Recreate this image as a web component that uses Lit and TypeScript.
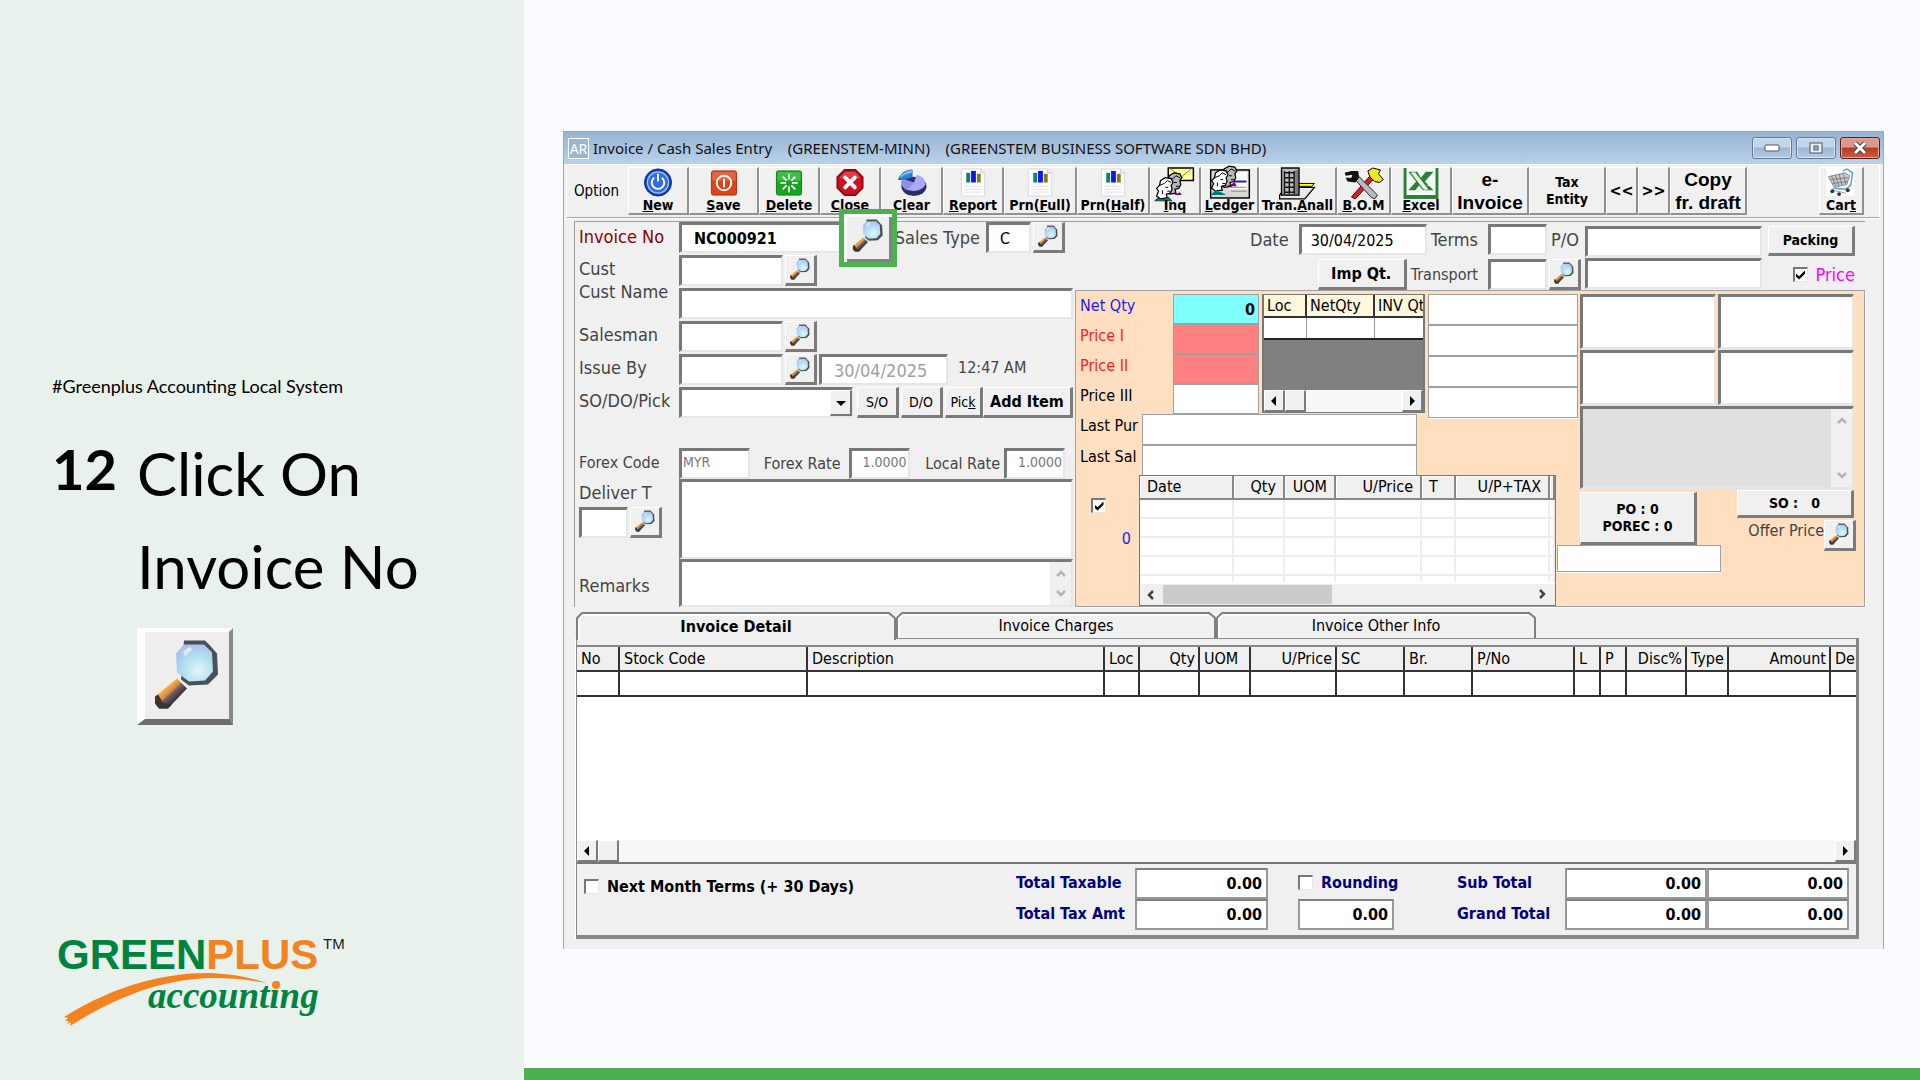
import { LitElement, html, css, svg, nothing } from "lit";
import { customElement, property } from "lit/decorators.js";

@customElement("magnifier-icon")
class MagnifierIcon extends LitElement {
  static styles = css`
    :host { display: block; width: 100%; height: 100%; }
    svg { display: block; width: 100%; height: 100%; }
  `;
  render() {
    return html`<svg viewBox="8 2 72 76" aria-hidden="true">
      <defs>
        <radialGradient id="lens" cx="0.6" cy="0.7" r="0.75">
          <stop offset="0" stop-color="#e4f6f8" />
          <stop offset="0.5" stop-color="#b4e2f2" />
          <stop offset="1" stop-color="#a9bdec" />
        </radialGradient>
        <linearGradient id="grip" x1="0.3" y1="0.3" x2="0.65" y2="0.65">
          <stop offset="0" stop-color="#ffb851" />
          <stop offset="0.45" stop-color="#d98a3c" />
          <stop offset="0.6" stop-color="#7c5f62" />
          <stop offset="1" stop-color="#3a3a42" />
        </linearGradient>
      </defs>
      <path d="M34 44 L44 54 L25 74 L16 74 L12 69 L12 62 Z" fill="url(#grip)" />
      <path d="M12 62 L12 69 L16 74 L25 74 L29 70 L20 68 L15 60 Z" fill="#3b3530" />
      <path d="M41 6 L62 6 L67 11 L74 19 L75 40 L65 50 L46 51 L38 45 Z" fill="#4a5058" />
      <path d="M41 10 L61 10 L69 18 L70 37 L62 46 L46 47 L34 38 L33 19 Z" fill="url(#lens)" />
      <path d="M40 17 L47 12 L49 15 L42 22 Z" fill="#e9f2ff" opacity="0.8" />
    </svg>`;
  }
}

@customElement("tool-icon")
class ToolIcon extends LitElement {
  @property() name = "";
  static styles = css`
    :host { display: block; height: 29px; }
    svg { display: block; height: 29px; margin: 0 auto; overflow: visible; }
  `;
  private person(x: number, fill: string) {
    return svg`<g transform="translate(${x} 0)">
      <path d="M1 20 L3 15 L1 12 L4 9 L5 4 L10 1 L16 2 L18 6 L16 9 L17 13 L15 17 L11 18 L12 22 L5 23 Z" fill=${fill} stroke="#000" stroke-width="1.3" />
      <path d="M4 9 L9 7 L12 4 L16 6" fill="none" stroke="#000" />
      <path d="M10 11 H13 M12 15 H15 M7 14 V18" stroke="#000" />
    </g>`;
  }
  private art() {
    switch (this.name) {
      case "new":
        return svg`<circle cx="15" cy="15" r="14" fill="#0d3fb5" stroke="#0a2d86" />
          <circle cx="15" cy="15" r="11" fill="#2f6bea" stroke="#a8c6ff" stroke-width="1.2" />
          <path d="M11 10 A6.500 6.500 0 1 0 19 10" fill="none" stroke="#fff" stroke-width="2" />
          <path d="M15 6 V14" stroke="#fff" stroke-width="2" />`;
      case "save":
        return svg`<rect x="2" y="3" width="26" height="25" rx="2" fill="#d9451c" stroke="#a8300f" />
          <rect x="3" y="4" width="24" height="9" fill="#ef7b58" opacity="0.6" />
          <circle cx="15" cy="15.500" r="7.500" fill="none" stroke="#fff" stroke-width="2" />
          <path d="M15 11 V20" stroke="#fff" stroke-width="2" />`;
      case "delete":
        return svg`<rect x="2" y="3" width="26" height="25" rx="2" fill="#18a522" stroke="#0b7b14" />
          <rect x="3" y="4" width="24" height="9" fill="#55cf58" opacity="0.6" />
          <path d="M15 6 V12 M15 19 V25 M6 15.500 H12 M18 15.500 H24 M8.500 9 L12.500 13 M17.500 18 L21.500 22 M21.500 9 L17.500 13 M12.500 18 L8.500 22" stroke="#fff" stroke-width="1.8" />`;
      case "close":
        return svg`<path d="M9.500 2 H20.500 L28 9.500 V20.500 L20.500 28 H9.500 L2 20.500 V9.500 Z" fill="#cf1020" stroke="#8c0a14" stroke-linejoin="round" stroke-width="2" />
          <path d="M4 10 L10 4 H20 L26 10 Q15 15 4 10Z" fill="#ee5a62" opacity="0.6" />
          <path d="M10 10 L20 20 M20 10 L10 20" stroke="#fff" stroke-width="4" stroke-linecap="round" />`;
      case "clear":
        return svg`<ellipse cx="17" cy="19" rx="13" ry="10" fill="#2d2d66" />
          <path d="M4 16 A13 10 0 0 0 29 17 A12 10 0 0 0 20 7 L17 15 Z" fill="#a9a9f5" />
          <path d="M4 13 A13 10 0 0 0 8 22 L10 23 L17 15 L6 11 Z" fill="#8f8fe6" />
          <path d="M1 12 Q4 3 15 2 L15 10 L9 11 Z" fill="#2f86d6" stroke="#155a9c" />
          <path d="M3 8 Q8 3 15 2 L15 5 Q8 6 3 10Z" fill="#7cc0f4" />`;
      case "report":
        return svg`<path d="M3 1 H23 L27 5 V29 H3 Z" fill="#fdfdfd" stroke="#dadada" />
          <path d="M23 1 V5 H27" fill="none" stroke="#c8c8c8" />
          <rect x="8" y="5" width="4" height="10" fill="#0b8080" />
          <rect x="13" y="3" width="5" height="12" fill="#1414ee" />
          <rect x="19" y="6" width="4" height="9" fill="#808010" />
          <path d="M6 19 H24 M6 22 H24 M6 25 H24" stroke="#e3e3e3" />`;
      case "inq":
        return svg`<path d="M14 0 H40 V13 H14 Z" fill="#ffff9c" stroke="#000" stroke-width="1.5" />
          <path d="M15 0 L28 9 L39 0" fill="none" stroke="#8a8a20" />
          <g transform="translate(8 4)">${this.person(2, "#b8b8b8")}</g>
          <path d="M20 28 L26 25 L28 28 Z" fill="#800080" />
          <g transform="translate(0 9)">${this.person(1, "#ffffff")}</g>
          <path d="M0 34 L3 31 L9 32 L14 30 L18 34 Z" fill="#007878" stroke="#000" stroke-width="0.600" />`;
      case "ledger":
        return svg`<rect x="1" y="2" width="40" height="29" fill="#d8d8d8" stroke="#000" stroke-width="1.500" />
          <rect x="20" y="4" width="19" height="18" fill="#fff" />
          <path d="M24 14 H38" stroke="#1a1a9c" stroke-width="2" />
          <path d="M22 20 H38 M22 24 H38" stroke="#888" />
          <g transform="translate(8 -3)">${this.person(2, "#b8b8b8")}</g>
          <path d="M17 19 L26 15 L28 19 Z" fill="#800080" />
          <g transform="translate(0 1)">${this.person(1, "#ffffff")}</g>
          <path d="M1 28 L5 24 L12 25 L17 28 Z" fill="#007878" />`;
      case "analysis":
        return svg`<path d="M2 28 L8 20 H38 L28 32 H2 Z" fill="#e9e9e9" stroke="#000" stroke-width="1.300" />
          <path d="M21 16 H38 L35 19 H21 Z" fill="#ffff20" stroke="#000" />
          <rect x="4" y="0" width="18" height="28" fill="#bdbdbd" stroke="#000" stroke-width="1.500" />
          <path d="M7 5 H17 M7 10 H17 M7 15 H17 M7 20 H17 M7 25 H17 M7 3 V27 M12 3 V27 M17 3 V27" stroke="#111" stroke-width="1.500" />
          <rect x="18" y="2" width="3" height="25" fill="#7b7b7b" />`;
      case "bom":
        return svg`<path d="M8 30 L12 32 L34 8 L30 5 Z" fill="#e01b24" stroke="#500" />
          <path d="M25 3 L30 0 L38 2 L36 6 L41 12 L37 15 L32 14 L27 9 Z" fill="#eee62a" stroke="#000" />
          <path d="M10 10 L14 7 L35 28 L32 32 L28 30 Z" fill="#b9b9c2" stroke="#222" />
          <path d="M1 5 L8 3 L15 3 L16 10 L12 15 L4 14 L2 10 L8 10 L9 7 L2 8 Z" fill="#111" />`;
      case "excel":
        return svg`<rect x="0" y="0" width="36" height="32" fill="#2d7d3a" />
          <rect x="3" y="0" width="30" height="28" fill="#f4faf4" />
          <path d="M5 4 H14 L18 10 L23 4 H31 L22 14 L31 23 H20 L16 18 L12 23 H5 L13 14 Z" fill="#2d7d3a" />
          <path d="M8 5 H12 L25 22 H21 Z M24 15 H31 M24 18 H31" fill="#e6f3e6" stroke="#e6f3e6" stroke-width="0.800" />`;
      case "cart":
        return svg`<rect x="0" y="0" width="29" height="29" fill="#fff" />
          <path d="M17 3 L21 1 L27 5 L25 18 L20 22 L8 21" fill="none" stroke="#4f9be0" stroke-width="1.500" />
          <path d="M2 9 L19 5 L24 8 L21 17 L8 20 Z" fill="#c9c9c9" stroke="#8b8b8b" />
          <path d="M5 8 L10 19 M9 7 L13 19 M13 6 L16 18 M17 5 L20 17 M4 12 L23 10 M6 16 L22 14" stroke="#777" stroke-width="0.900" />
          <path d="M8 20 L6 25 M20 20 L22 25 M6 23 L20 26" stroke="#999" />
          <circle cx="6" cy="24" r="2" fill="#333" /><circle cx="13" cy="27" r="2" fill="#333" /><circle cx="22" cy="23" r="2" fill="#333" />`;
      default:
        return nothing;
    }
  }
  render() {
    const wide = ["inq", "ledger", "analysis", "bom"].includes(this.name);
    const w = wide ? 42 : this.name === "excel" ? 36 : 30;
    return html`<svg width=${w} viewBox="0 0 ${w} 30" aria-hidden="true">${this.art()}</svg>`;
  }
}

type Tool = { icon: string; pre: string; key: string; post: string; cls: string };

const TOOLS: Tool[] = [
  { icon: "new", pre: "", key: "N", post: "ew", cls: "w60" },
  { icon: "save", pre: "", key: "S", post: "ave", cls: "w70" },
  { icon: "delete", pre: "", key: "D", post: "elete", cls: "w60" },
  { icon: "close", pre: "", key: "C", post: "lose", cls: "w60" },
  { icon: "clear", pre: "C", key: "l", post: "ear", cls: "w62" },
  { icon: "report", pre: "", key: "R", post: "eport", cls: "w60" },
  { icon: "report", pre: "Prn(", key: "F", post: "ull)", cls: "w73" },
  { icon: "report", pre: "Prn(", key: "H", post: "alf)", cls: "w73" },
  { icon: "inq", pre: "", key: "I", post: "nq", cls: "w51" },
  { icon: "ledger", pre: "", key: "L", post: "edger", cls: "w57" },
  { icon: "analysis", pre: "Tran.", key: "A", post: "nall", cls: "w79" },
  { icon: "bom", pre: "", key: "B", post: ".O.M", cls: "w53" },
  { icon: "excel", pre: "", key: "E", post: "xcel", cls: "w60" },
];

const LINE_COLUMNS: [string, string, string][] = [
  ["No", "c42", ""], ["Stock Code", "c188", ""], ["Description", "", ""], ["Loc", "c35", ""],
  ["Qty", "c60", "num"], ["UOM", "c51", ""], ["U/Price", "c86", "num"], ["SC", "c68", ""],
  ["Br.", "c68", ""], ["P/No", "c102", ""], ["L", "c26", ""], ["P", "c26", ""],
  ["Disc%", "c60", "num"], ["Type", "c42", ""], ["Amount", "c102", "num"], ["De", "c26", ""],
];

const HISTORY_COLUMNS: [string, string, string][] = [
  ["Date", "", ""], ["Qty", "c51", "num"], ["UOM", "c51", "num"], ["U/Price", "c86", "num"],
  ["T", "c34", ""], ["U/P+TAX", "c94", "num"], ["", "c6", ""],
];

@customElement("app-root")
class AppRoot extends LitElement {
  static styles = css`
    :host {
      display: block;
      color: #000;
      font-family: "DejaVu Sans Condensed", "DejaVu Sans", sans-serif;
      font-size: 16px;
    }
    * { box-sizing: border-box; }
    button, input, select, textarea { font: inherit; color: inherit; margin: 0; border-radius: 0; min-width: 0; }
    button { cursor: pointer; white-space: nowrap; }
    .page { display: grid; grid-template-columns: 524px minmax(0, 1fr); min-height: 100vh; }

    .side { display: flex; flex-direction: column; padding: 373px 52px 44px; background: #e8f1ec; font-family: Lato, sans-serif; }
    .tag { margin: 0; font-size: 18px; line-height: 26px; }
    .step { display: flex; gap: 20px; margin: 28px 0 0; font-weight: 400; font-size: 60px; line-height: 93px; }
    .step-no { font-weight: 700; font-size: 56px; line-height: 84px; }
    .sample { width: 96px; height: 97px; margin: 15px 0 0 85px; padding: 2px 6px 4px 6px; background: #eeeeee; border: solid; border-width: 4px 4px 6px 8px; border-color: #fff #8a8a8a #6d6d6d #fff; }
    .logo { margin-top: auto; }
    .logo svg { display: block; width: 300px; height: 104px; }

    .main { display: flex; align-items: center; padding: 0 36px 12px 39px; background: #fafbff; border-bottom: 12px solid #4caf50; }
    .window { flex: 1; min-width: 0; margin-top: 24px; background: #f0f0f0; border: solid #99a9ba; border-width: 1px 1px 0; }
    .title { display: flex; align-items: center; gap: 4px; height: 32px; padding: 0 3px 0 4px; background: linear-gradient(#98b4d3, #b9d1ea); font-family: "Noto Sans", sans-serif; white-space: pre; }
    .app-badge { width: 21px; height: 21px; border: 1px solid #fff; background: #9bb6d2; color: #fff; font-size: 14px; line-height: 19px; text-align: center; }
    .title-text { flex: 1; margin: 0; font-size: 15px; font-weight: 400; color: #111; }
    .win-btn { display: grid; place-items: center; width: 40px; height: 22px; padding: 0; border: 1px solid #5f7894; border-radius: 3px; background: linear-gradient(#c3d5e9 45%, #9db6d1 50%, #b5cce5); box-shadow: inset 0 0 0 1px #d8e6f4; }
    .win-btn.close { background: linear-gradient(#dc9a8c 45%, #b83a25 50%, #cc5e43); border-color: #5a1d1d; box-shadow: inset 0 0 0 1px #e5a596; }
    .win-btn svg { display: block; }

    .tools { display: flex; height: 54px; margin: 0 3px 0 2px; padding: 2px 15px 2px 1px; border: 1px solid #a6a6a6; border-color: #fff #fff #a6a6a6; box-shadow: 0 1px #fff; }
    .option { display: flex; align-items: center; width: 60px; padding-left: 6px; font-size: 15px; }
    .tool { display: flex; flex-direction: column; align-items: center; padding: 0; background: #f0f0f0; border: solid; border-width: 1px 2px 2px 1px; border-color: #fff #919191 #919191 #fff; font-weight: 700; font-size: 14px; line-height: 18px; }
    .tool tool-icon { flex: 0 0 29px; }
    .tool span { position: relative; margin-top: -1px; }
    .tool.text { justify-content: center; }
    .tool.arial { font-family: "Liberation Sans", Arial, sans-serif; font-size: 19px; line-height: 23px; }
    .tool.lines { line-height: 17px; }
    .spacer { flex: 1; }
    .w32 { width: 32px; } .w45 { width: 45px; } .w51 { width: 51px; } .w53 { width: 54px; } .w57 { width: 58px; }
    .w60 { width: 61px; } .w62 { width: 62px; } .w70 { width: 70px; } .w73 { width: 73px; } .w77 { width: 77px; } .w79 { width: 78px; }

    .form { display: grid; grid-template-columns: 498px minmax(0, 1fr); gap: 2px; margin: 3px 18px 0 10px; border: solid #a0a0a0; border-width: 1px 0 0 1px; }
    .left { display: grid; grid-template-columns: 104px minmax(0, 1fr); }
    .labels { display: grid; grid-template-rows: 25px 32px 23px 43px 33px 33px 62px 30px 35px 58px; align-items: end; align-content: start; padding-left: 4px; color: #444; font-size: 18px; line-height: 20px; white-space: nowrap; }
    .labels .must { color: #8b0000; }
    .labels .mid { font-size: 16px; }
    .fields { display: flex; flex-direction: column; gap: 2px; }
    .row { display: flex; align-items: center; height: 31px; gap: 2px; position: relative; }
    .row.forex { margin: 28px 0 -2px; align-items: flex-end; }
    .box { height: 31px; padding: 0 4px; background: #fff; border: solid; border-width: 3px 2px 2px 3px; border-color: #787878 #e6e6e6 #e6e6e6 #787878; outline: none; }
    .flat { padding: 0 2px; background: #fff; border: 1px solid #a0a0a0; box-shadow: 0 1px #fff; outline: none; }
    .btn { padding: 0; background: #f0f0f0; border: solid; border-width: 1px 3px 3px 1px; border-color: #fff #7b7b7b #7b7b7b #fff; font-size: 14px; height: 31px; }
    .find { width: 32px; height: 31px; flex: none; padding: 1px 3px 2px 3px; }
    .strong { font-weight: 700; }
    .f16 { font-size: 16px; }
    .code { width: 104px; }
    .grow { flex: 1; }
    .inv { width: 170px; padding-left: 12px; }
    .sales { flex: 1; padding-right: 4px; text-align: right; color: #444; font-size: 18px; }
    .sales-box { width: 45px; padding-left: 11px; }
    .tail { margin-right: 8px; }
    .highlight { position: absolute; z-index: 1; left: 160px; top: -13px; width: 58px; height: 58px; padding: 2px 7px 7px 7px; border: 5px solid #4caf50; background: #efefef; box-shadow: inset 3px 3px #fff, inset -3px -3px #848484; }
    .issued { width: 129px; padding-left: 12px; color: #a0a0a0; font-size: 18px; }
    .clock { margin-left: 8px; padding-bottom: 4px; color: #444; }
    .combo { position: relative; width: 174px; height: 31px; margin-right: 2px; }
    .combo select { appearance: none; width: 100%; }
    .combo-arrow { position: absolute; right: 1px; top: 3px; width: 22px; height: 26px; display: grid; place-items: center; background: #f0f0f0; border: solid; border-width: 1px 2px 2px 1px; border-color: #fff #777 #777 #fff; pointer-events: none; }
    .w36 { width: 38px; margin-right: -2px; } .w42 { width: 42px; }
    .myr { width: 71px; padding: 0 1px 5px; font-size: 14px; color: #777; }
    .rate { width: 61px; padding: 0 1px 5px; font-size: 14px; color: #777; text-align: right; }
    .forex label { flex: 1; padding: 0 6px 6px 0; text-align: right; color: #444; }
    .forex label.near { padding-right: 2px; }
    .area { display: block; width: 100%; resize: none; overflow: hidden; }
    .deliver { height: 80px; }
    .memo { position: relative; margin-top: -2px; }
    .memo .area { height: 48px; }
    .chevrons { position: absolute; right: 2px; top: 3px; bottom: 2px; width: 21px; display: flex; flex-direction: column; justify-content: space-between; align-items: center; padding: 6px 0; background: #f0f0f0; }
    .pair { display: flex; gap: 2px; }
    .tiny { width: 49px; }

    .right { display: flex; flex-direction: column; min-width: 0; }
    .head { display: flex; justify-content: flex-end; height: 68px; padding: 2px 10px 0 0; color: #444; white-space: nowrap; }
    .stack { display: flex; flex-direction: column; gap: 4px; }
    .line { display: flex; align-items: center; justify-content: flex-end; height: 31px; gap: 4px; }
    .line .find { margin-left: -2px; }
    .l18 { font-size: 18px; }
    .date { width: 128px; padding-left: 9px; margin-left: 6px; color: #000; }
    .wider { padding-right: 6px; }
    .w59 { width: 59px; }
    .w88 { width: 89px; height: 31px; color: #000; }
    .po-label { width: 30px; }
    .stack.po { gap: 1px; padding: 2px 6px 0 4px; }
    .w176 { width: 177px; }
    .stack.pack { width: 87px; gap: 8px; padding-top: 2px; align-items: flex-end; }
    .packing { width: 87px; height: 30px; color: #000; font-weight: 700; }
    .tick { display: flex; align-items: center; gap: 8px; }
    .check { appearance: none; flex: none; display: grid; place-items: center; width: 15px; height: 15px; background: #fff; border: solid; border-width: 2px 1px 1px 2px; border-color: #777 #e6e6e6 #e6e6e6 #777; }
    .check:checked::after { content: ""; width: 9px; height: 9px; background: #000; clip-path: polygon(0 35%, 35% 65%, 100% 0, 100% 35%, 35% 100%, 0 70%); }
    .magenta { color: #ff00ff; }

    .stock { flex: 1; display: grid; grid-template-columns: 480px 24px minmax(0, 1fr); grid-template-rows: 184px 14px 55px 62px; background: #ffdfbf; border: 1px solid #a0a0a0; box-shadow: 1px 1px #fff; }
    .prices { grid-area: 1 / 1 / 2 / 3; display: grid; grid-template-columns: 183px 163px 150px; grid-template-rows: 122px 62px; column-gap: 3px; padding-top: 3px; }
    .plist { display: grid; grid-template-columns: 97px 86px; grid-auto-rows: 30px; }
    .plist label, .lasts label { padding-left: 4px; line-height: 24px; }
    .blue { color: #1a1aff; }
    .red { color: #ff1a1a; }
    .cyan { background: #80ffff; text-align: right; padding-right: 3px; }
    .pink { background: #ff8080; }
    .loc { display: flex; flex-direction: column; height: 119px; overflow: hidden; border: 2px solid #777; border-width: 1px 2px; background: #808080; }
    .loc table { width: 100%; border-collapse: collapse; table-layout: fixed; background: #fff; }
    .loc th { height: 22px; padding: 0 0 0 3px; background: #fff8dc; border: solid #333; border-width: 0 2px 2px 0; font-weight: 400; text-align: left; white-space: nowrap; }
    .loc td { height: 22px; border: solid #999; border-width: 0 1px 2px 0; border-bottom-color: #222; }
    .loc th:last-child, .loc td:last-child { border-right: 0; }
    .bar { display: flex; height: 22px; margin-top: auto; background: #f8f8f8; }
    .bar .btn { width: 21px; height: 22px; border-width: 1px 2px 2px 1px; display: grid; place-items: center; }
    .bar .end { margin-left: auto; }
    .quad { display: grid; grid-template-rows: repeat(4, 31px); }
    .lasts { grid-column: 1 / 3; display: grid; grid-template-columns: 66px 275px; grid-auto-rows: 31px; margin-top: -2px; }
    .past { grid-area: 2 / 1 / 5 / 2; display: grid; grid-template-columns: 63px minmax(0, 1fr); }
    .past-side { display: flex; flex-direction: column; align-items: flex-end; gap: 16px; padding: 23px 15px 0 0; }
    .past-side .check { margin-right: 18px; }
    .past-side output { margin-right: -7px; }
    .history { display: flex; flex-direction: column; border: 1px solid #777; background: #fff; }
    .history table { width: 100%; border-collapse: collapse; table-layout: fixed; }
    .history th { height: 23px; padding: 0 7px; background: #f0f0f0; border: solid #888; border-width: 0 2px 2px 0; box-shadow: inset 1px 1px #fff; font-weight: 400; text-align: left; white-space: nowrap; line-height: 20px; }
    .history th:last-child { padding: 0; }
    .history td { height: 19px; padding: 0; border: solid #ededed; border-width: 0 2px 2px 0; }
    .history tr:last-child td { border-bottom: 0; height: 7px; }
    .history th.num, .lines-table .num { text-align: right; }
    .hbar { display: flex; align-items: center; height: 21px; margin-top: auto; padding: 0 7px 0 5px; background: #f0f0f0; }
    .hthumb { width: 169px; height: 19px; margin-left: 6px; background: #cbcbcb; }
    .hbar .last { margin-left: auto; }
    .offers { grid-area: 1 / 3 / 3 / 4; display: grid; grid-template-columns: 136px 136px; grid-template-rows: 55px 55px 1fr; gap: 1px 2px; padding-top: 3px; }
    .offers textarea { width: 100%; height: 100%; resize: none; overflow: hidden; }
    .wide { position: relative; grid-column: 1 / 3; }
    .wide textarea { background: #e0e0e0; }
    .orders { grid-area: 3 / 3 / 4 / 4; display: flex; justify-content: space-between; align-items: flex-start; padding: 1px 8px 0 0; }
    .po-btn { width: 117px; height: 53px; margin-top: 2px; font-weight: 700; line-height: 17px; white-space: pre; }
    .so { display: flex; flex-direction: column; align-items: flex-end; gap: 2px; }
    .so-btn { width: 117px; height: 28px; margin-right: 2px; font-weight: 700; white-space: pre; }
    .offer { display: flex; align-items: flex-start; color: #444; line-height: 22px; white-space: nowrap; }
    .extra { grid-area: 4 / 2 / 5 / 4; padding: 1px 0 0 1px; }
    .extra input { width: 164px; height: 27px; }

    .tabs { display: flex; height: 26px; margin: 5px 0 0 12px; position: relative; z-index: 1; }
    .tab { position: relative; width: 320px; padding: 0; border: 0; background: none; }
    .tab svg { position: absolute; inset: 0; width: 100%; height: 100%; }
    .tab span { position: relative; }
    .tab.on { font-weight: 700; height: 28px; }
    .detail { margin: 0 24px 10px 12px; border: solid #888; border-width: 1px 3px 4px 1px; box-shadow: -1px 0 #fff; padding-top: 6px; }
    .sheet { display: flex; flex-direction: column; height: 219px; background: #fff; border-top: 2px solid #888; border-bottom: 2px solid #777; }
    .lines-table { width: 100%; border-collapse: collapse; table-layout: fixed; }
    .lines-table th { height: 24px; padding: 0 3px 0 4px; overflow: hidden; background: #f0f0f0; border: solid #333; border-width: 0 2px 2px 0; font-weight: 400; line-height: 20px; text-align: left; white-space: nowrap; }
    .lines-table td { height: 25px; padding: 0; border: solid #333; border-width: 0 2px 2px 0; }
    .lines-table th:last-child, .lines-table td:last-child { border-right: 0; }
    .c6 { width: 5px; } .c26 { width: 26px; } .c34 { width: 34px; } .c35 { width: 35px; } .c42 { width: 42px; }
    .c51 { width: 51px; } .c60 { width: 60px; } .c68 { width: 68px; } .c86 { width: 86px; }
    .c94 { width: 94px; } .c102 { width: 102px; } .c188 { width: 188px; }
    .totals { display: flex; height: 71px; padding: 4px 7px 0 7px; font-weight: 700; white-space: nowrap; }
    .totals .tick { align-self: flex-start; height: 36px; }
    .sums { display: grid; grid-template-rows: 31px 31px; align-items: center; }
    .sums label { padding-bottom: 2px; }
    .sums .box { border-width: 2px; border-color: #808080 #999 #999 #999; padding-right: 4px; text-align: right; font-weight: 700; color: #000; }
    .sums .tick { align-self: center; height: auto; }
    .navy { color: #000080; }
    .s1 { grid-template-columns: 119px 133px; margin-left: auto; }
    .s2 { grid-template-columns: 96px; margin-left: 30px; }
    .s3 { grid-template-columns: 108px 142px 142px; margin-left: 63px; }
  `;

  private find(label: string, cls = "") {
    return html`<button class="btn find ${cls}" aria-label=${label}><magnifier-icon></magnifier-icon></button>`;
  }
  private chevron(d: string, color = "#b4b4b4") {
    return html`<svg width="12" height="12" viewBox="0 0 12 12" aria-hidden="true"><path d=${d} fill="none" stroke=${color} stroke-width="2.500" /></svg>`;
  }
  private triangle(d: string) {
    return html`<svg width="10" height="10" viewBox="0 0 10 10" aria-hidden="true"><path d=${d} /></svg>`;
  }
  private chevrons() {
    return html`<div class="chevrons">${this.chevron("M2 8 L6 4 L10 8")}${this.chevron("M2 4 L6 8 L10 4")}</div>`;
  }

  private sidebar() {
    return html`<aside class="side">
      <p class="tag">#Greenplus Accounting Local System</p>
      <h1 class="step"><span class="step-no">12</span><span>Click On<br />Invoice No</span></h1>
      <div class="sample"><magnifier-icon></magnifier-icon></div>
      <div class="logo">
        <svg viewBox="52 932 300 104" role="img" aria-label="Greenplus accounting">
          <path d="M64 1017 C115 985 165 973 208 973 C234 974 252 978 267 983 C240 978 214 977 196 979 C150 983 108 1002 70 1026 L71 1022 L67 1024 L69 1021 L65 1021 L68 1018 Z" fill="#f58220" />
          <text x="57" y="969" font-family="Liberation Sans, Arial, sans-serif" font-weight="700" font-size="42" fill="#00833e">GREEN<tspan fill="#f58220">PLUS</tspan></text>
          <text x="323" y="949" font-family="Liberation Sans, Arial, sans-serif" font-size="15" fill="#222">TM</text>
          <text x="148" y="1008" font-family="Liberation Serif, Times New Roman, serif" font-style="italic" font-weight="700" font-size="37" fill="#00833e">accounting</text>
          <circle cx="276" cy="985" r="4" fill="#f58220" />
        </svg>
      </div>
    </aside>`;
  }

  private toolbar() {
    return html`<div class="tools" role="toolbar" aria-label="Options">
      <div class="option">Option</div>
      ${TOOLS.map((t) => html`<button class="tool ${t.cls}"><tool-icon name=${t.icon}></tool-icon><span>${t.pre}<u>${t.key}</u>${t.post}</span></button>`)}
      <button class="tool text arial w77">e-<br />Invoice</button>
      <button class="tool text lines w77">Tax<br />Entity</button>
      <button class="tool text w32 f16">&lt;&lt;</button>
      <button class="tool text w32 f16">&gt;&gt;</button>
      <button class="tool text arial w77">Copy<br />fr. draft</button>
      <div class="spacer"></div>
      <button class="tool w45"><tool-icon name="cart"></tool-icon><span>Car<u>t</u></span></button>
    </div>`;
  }

  private entry() {
    return html`<div class="left">
      <div class="labels">
        <label class="must" for="invoice">Invoice No</label>
        <label for="cust">Cust</label>
        <label for="cust-name">Cust Name</label>
        <label for="salesman">Salesman</label>
        <label for="issue">Issue By</label>
        <label for="pick">SO/DO/Pick</label>
        <label class="mid" for="forex">Forex Code</label>
        <label for="deliver-code">Deliver T</label>
        <div class="pair"><input id="deliver-code" class="box tiny" />${this.find("Find delivery address")}</div>
        <label for="remarks">Remarks</label>
      </div>
      <div class="fields">
        <div class="row">
          <input id="invoice" class="box inv strong" value="NC000921" />
          <button class="highlight" aria-label="Find invoice"><magnifier-icon></magnifier-icon></button>
          <label class="sales" for="sales-type">Sales Type</label>
          <input id="sales-type" class="box sales-box" value="C" />
          ${this.find("Find sales type", "tail")}
        </div>
        <div class="row"><input id="cust" class="box code" />${this.find("Find customer")}</div>
        <div class="row"><input id="cust-name" class="box grow" /></div>
        <div class="row"><input id="salesman" class="box code" />${this.find("Find salesman")}</div>
        <div class="row"><input id="issue" class="box code" />${this.find("Find issuer")}
          <input class="box issued" aria-label="Issue date" value="30/04/2025" /><span class="clock">12:47 AM</span></div>
        <div class="row">
          <div class="combo"><select id="pick" class="box"><option></option></select>
            <span class="combo-arrow">${this.triangle("M0 3 H10 L5 8 Z")}</span></div>
          <button class="btn w42">S/O</button><button class="btn w42">D/O</button>
          <button class="btn w36">Pic<u>k</u></button><button class="btn grow f16 strong">Add Item</button>
        </div>
        <div class="row forex">
          <input id="forex" class="box myr" value="MYR" />
          <label for="forex-rate">Forex Rate</label><input id="forex-rate" class="box rate" value="1.0000" />
          <label class="near" for="local-rate">Local Rate</label><input id="local-rate" class="box rate tail" value="1.0000" />
        </div>
        <textarea class="box area deliver" aria-label="Delivery address"></textarea>
        <div class="memo"><textarea id="remarks" class="box area"></textarea>${this.chevrons()}</div>
      </div>
    </div>`;
  }

  private header() {
    return html`<div class="head">
      <div class="stack">
        <div class="line"><label class="l18" for="date">Date</label><input id="date" class="box date" value="30/04/2025" />
          <label class="l18 wider" for="terms">Terms</label><input id="terms" class="box w59" />
          <label class="l18 po-label" for="po1">P/O</label></div>
        <div class="line"><button class="btn w88 f16 strong">Imp Qt.</button><label class="wider" for="transport">Transport</label>
          <input id="transport" class="box w59" />${this.find("Find transport")}</div>
      </div>
      <div class="stack po"><input id="po1" class="box w176" /><input class="box w176" aria-label="P/O second line" /></div>
      <div class="stack pack"><button class="btn packing">Packing</button>
        <label class="tick magenta l18"><input type="checkbox" class="check" checked />Price</label></div>
    </div>`;
  }

  private stock() {
    return html`<div class="stock">
      <div class="prices">
        <div class="plist">
          <label class="blue" for="net">Net Qty</label><input id="net" class="flat cyan strong" value="0" />
          <label class="red" for="p1">Price I</label><input id="p1" class="flat pink" />
          <label class="red" for="p2">Price II</label><input id="p2" class="flat pink" />
          <label for="p3">Price III</label><input id="p3" class="flat" />
        </div>
        <div class="loc">
          <table>
            <thead><tr><th class="c42">Loc</th><th class="c68">NetQty</th><th>INV Qt</th></tr></thead>
            <tbody><tr><td></td><td></td><td></td></tr></tbody>
          </table>
          <div class="bar"><button class="btn" aria-label="Scroll left">${this.triangle("M7 0 V10 L2 5 Z")}</button>
            <button class="btn" aria-label="Scroll thumb"></button>
            <button class="btn end" aria-label="Scroll right">${this.triangle("M3 0 V10 L8 5 Z")}</button></div>
        </div>
        <div class="quad">${[1, 2, 3, 4].map((n) => html`<input class="flat" aria-label="Info ${n}" />`)}</div>
        <div class="lasts">
          <label for="last-pur">Last Pur</label><input id="last-pur" class="flat" />
          <label for="last-sal">Last Sal</label><input id="last-sal" class="flat" />
        </div>
      </div>
      <div class="past">
        <div class="past-side"><input type="checkbox" class="check" checked aria-label="Show history" /><output class="blue">0</output></div>
        <div class="history">
          <table>
            <thead><tr>${HISTORY_COLUMNS.map(([t, c, k]) => html`<th class="${c} ${k}">${t}</th>`)}</tr></thead>
            <tbody>${[1, 2, 3, 4, 5].map(() => html`<tr>${HISTORY_COLUMNS.map(() => html`<td></td>`)}</tr>`)}</tbody>
          </table>
          <div class="hbar">${this.chevron("M8 2 L4 6 L8 10", "#444")}<div class="hthumb"></div>
            <span class="last">${this.chevron("M4 2 L8 6 L4 10", "#444")}</span></div>
        </div>
      </div>
      <div class="offers">
        ${[1, 2, 3, 4].map((n) => html`<textarea class="box" aria-label="Picture ${n}"></textarea>`)}
        <div class="wide"><textarea class="box" aria-label="Stock notes"></textarea>${this.chevrons()}</div>
      </div>
      <div class="orders">
        <button class="btn po-btn">PO : 0<br />POREC : 0</button>
        <div class="so"><button class="btn so-btn">SO :   0</button>
          <div class="offer"><span>Offer Price</span>${this.find("Find offer price")}</div></div>
      </div>
      <div class="extra"><input class="flat" aria-label="Offer" /></div>
    </div>`;
  }

  private tab(text: string, on = false) {
    return html`<button class="tab ${on ? "on" : ""}" role="tab" aria-selected=${on ? "true" : "false"}>
      <svg viewBox="0 0 320 27" preserveAspectRatio="none" aria-hidden="true">
        <path d="M1 27 V6 L6 1 H313 L319 6 V27" fill="#f0f0f0" stroke="#808080" stroke-width="2" />
        <path d="M3 27 V7 L7 3 H312" fill="none" stroke="#fff" stroke-width="1.500" />
      </svg><span>${text}</span></button>`;
  }

  private detail() {
    return html`<div class="tabs" role="tablist">${this.tab("Invoice Detail", true)}${this.tab("Invoice Charges")}${this.tab("Invoice Other Info")}</div>
    <div class="detail">
      <div class="sheet">
        <table class="lines-table">
          <thead><tr>${LINE_COLUMNS.map(([t, c, k]) => html`<th class="${c} ${k}">${t}</th>`)}</tr></thead>
          <tbody><tr>${LINE_COLUMNS.map(() => html`<td></td>`)}</tr></tbody>
        </table>
        <div class="bar"><button class="btn" aria-label="Scroll left">${this.triangle("M7 0 V10 L2 5 Z")}</button>
          <button class="btn" aria-label="Scroll thumb"></button>
          <button class="btn end" aria-label="Scroll right">${this.triangle("M3 0 V10 L8 5 Z")}</button></div>
      </div>
      <div class="totals">
        <label class="tick"><input type="checkbox" class="check" />Next Month Terms (+ 30 Days)</label>
        <div class="sums s1 navy">
          <label for="taxable">Total Taxable</label><input id="taxable" class="box" value="0.00" />
          <label for="tax">Total Tax Amt</label><input id="tax" class="box" value="0.00" />
        </div>
        <div class="sums s2"><label class="tick navy"><input type="checkbox" class="check" />Rounding</label>
          <input class="box" aria-label="Rounding amount" value="0.00" /></div>
        <div class="sums s3">
          <label class="navy" for="sub">Sub Total</label><input id="sub" class="box" value="0.00" /><input class="box" aria-label="Sub total local" value="0.00" />
          <label class="navy" for="grand">Grand Total</label><input id="grand" class="box" value="0.00" /><input class="box" aria-label="Grand total local" value="0.00" />
        </div>
      </div>
    </div>`;
  }

  render() {
    return html`<div class="page">
      ${this.sidebar()}
      <main class="main">
        <section class="window">
          <header class="title"><span class="app-badge">AR</span><h2 class="title-text">Invoice / Cash Sales Entry    (GREENSTEM-MINN)    (GREENSTEM BUSINESS SOFTWARE SDN BHD)</h2><button class="win-btn" aria-label="Minimize"><svg width="16" height="8"><rect x="1" y="1" width="14" height="6" rx="1" fill="#fff" stroke="#556" /></svg></button><button class="win-btn" aria-label="Maximize"><svg width="14" height="12"><rect x="1" y="1" width="12" height="10" fill="#e8eef5" stroke="#556" /><rect x="5" y="4" width="4" height="4" fill="#9fb5cd" stroke="#556" /></svg></button><button class="win-btn close" aria-label="Close window"><svg width="16" height="14"><path d="M3 2 L13 12 M13 2 L3 12" stroke="#444" stroke-width="5" /><path d="M3 2 L13 12 M13 2 L3 12" stroke="#fff" stroke-width="3" /></svg></button></header>
          ${this.toolbar()}
          <div class="form">
            ${this.entry()}
            <div class="right">${this.header()}${this.stock()}</div>
          </div>
          ${this.detail()}
        </section>
      </main>
    </div>`;
  }
}
